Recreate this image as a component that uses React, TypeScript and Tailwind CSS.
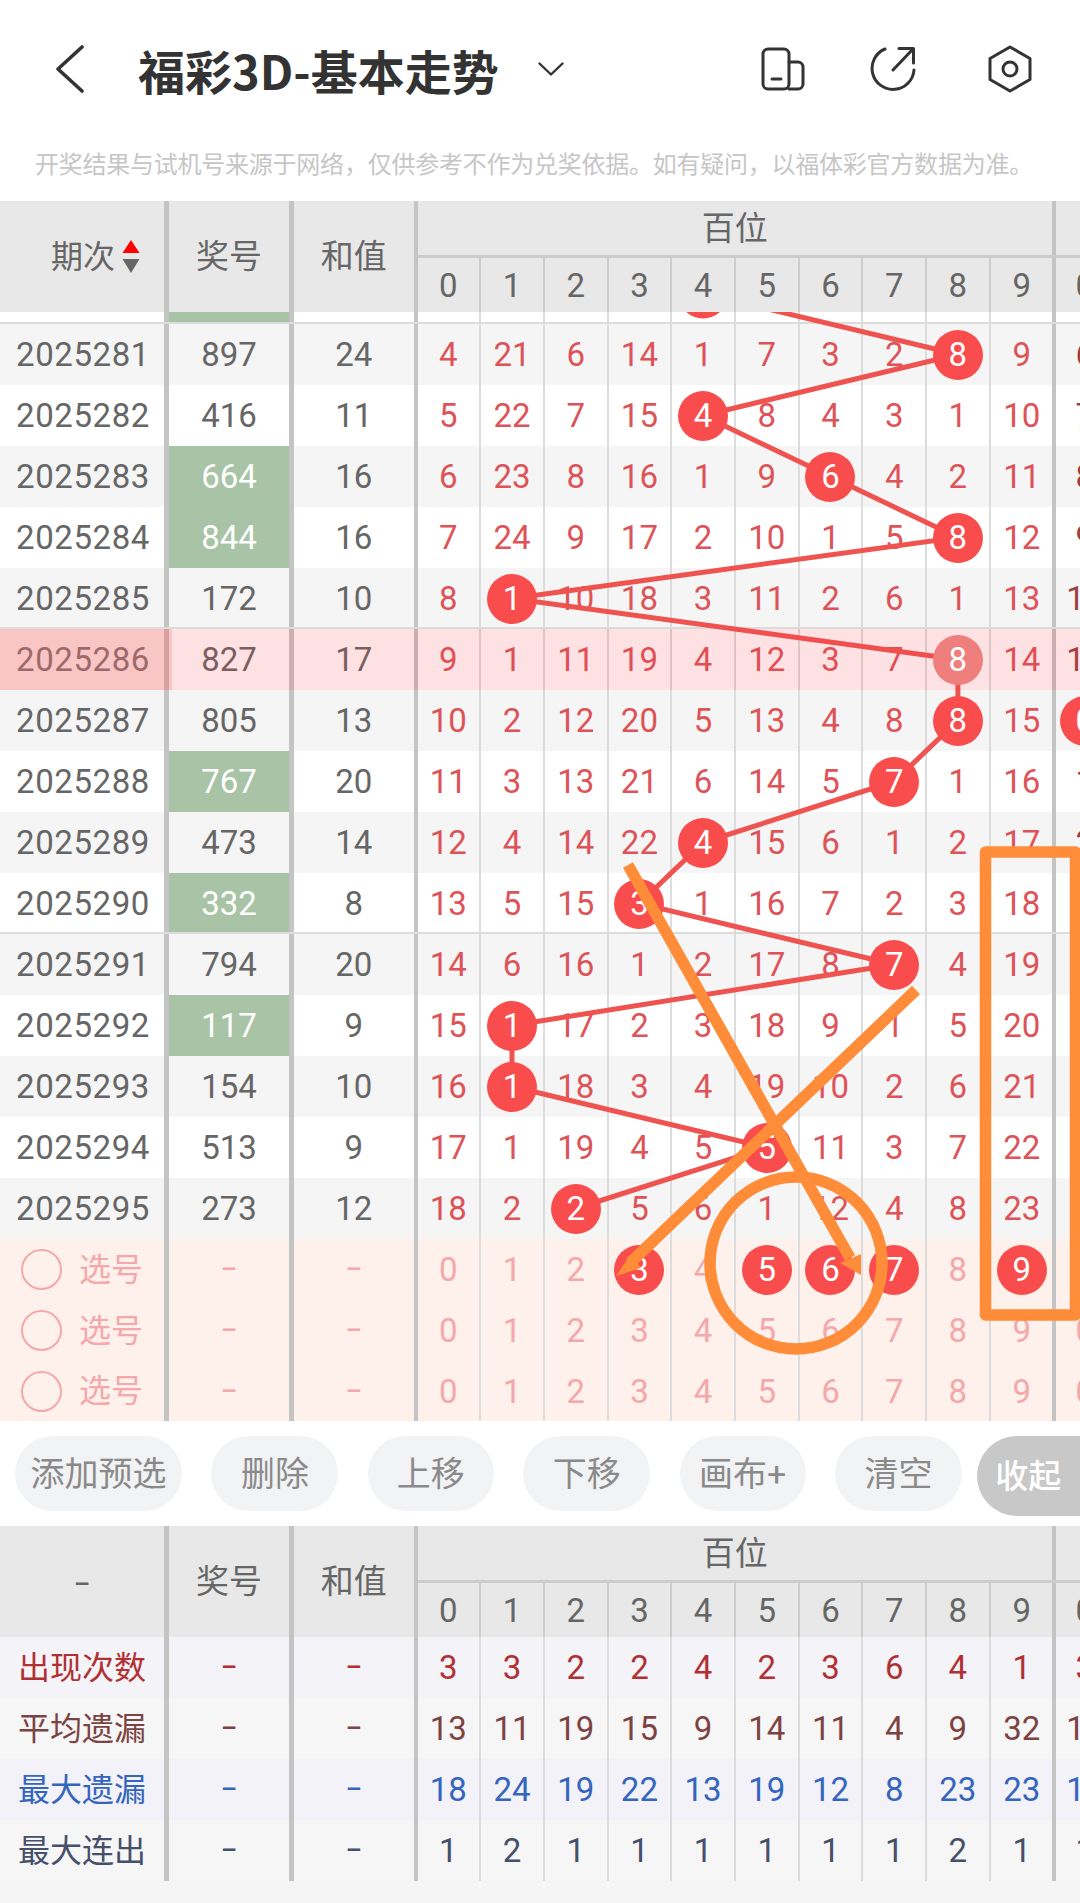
import React from "react";

interface TrendRow {
  period: string;
  code: string;
  sum: string;
  green?: boolean;
  ball: number;
  values: number[];
  tens: string;
  tensBall?: boolean;
}

const rows: TrendRow[] = [
  { period: "2025281", code: "897", sum: "24", ball: 8, values: [4, 21, 6, 14, 1, 7, 3, 2, 8, 9], tens: "6" },
  { period: "2025282", code: "416", sum: "11", ball: 4, values: [5, 22, 7, 15, 4, 8, 4, 3, 1, 10], tens: "7" },
  { period: "2025283", code: "664", sum: "16", green: true, ball: 6, values: [6, 23, 8, 16, 1, 9, 6, 4, 2, 11], tens: "8" },
  { period: "2025284", code: "844", sum: "16", green: true, ball: 8, values: [7, 24, 9, 17, 2, 10, 1, 5, 8, 12], tens: "9" },
  { period: "2025285", code: "172", sum: "10", ball: 1, values: [8, 1, 10, 18, 3, 11, 2, 6, 1, 13], tens: "10" },
  { period: "2025286", code: "827", sum: "17", ball: 8, values: [9, 1, 11, 19, 4, 12, 3, 7, 8, 14], tens: "11" },
  { period: "2025287", code: "805", sum: "13", ball: 8, values: [10, 2, 12, 20, 5, 13, 4, 8, 8, 15], tens: "0", tensBall: true },
  { period: "2025288", code: "767", sum: "20", green: true, ball: 7, values: [11, 3, 13, 21, 6, 14, 5, 7, 1, 16], tens: "1" },
  { period: "2025289", code: "473", sum: "14", ball: 4, values: [12, 4, 14, 22, 4, 15, 6, 1, 2, 17], tens: "2" },
  { period: "2025290", code: "332", sum: "8", green: true, ball: 3, values: [13, 5, 15, 3, 1, 16, 7, 2, 3, 18], tens: "3" },
  { period: "2025291", code: "794", sum: "20", ball: 7, values: [14, 6, 16, 1, 2, 17, 8, 7, 4, 19], tens: "4" },
  { period: "2025292", code: "117", sum: "9", green: true, ball: 1, values: [15, 1, 17, 2, 3, 18, 9, 1, 5, 20], tens: "5" },
  { period: "2025293", code: "154", sum: "10", ball: 1, values: [16, 1, 18, 3, 4, 19, 10, 2, 6, 21], tens: "6" },
  { period: "2025294", code: "513", sum: "9", ball: 5, values: [17, 1, 19, 4, 5, 5, 11, 3, 7, 22], tens: "7" },
  { period: "2025295", code: "273", sum: "12", ball: 2, values: [18, 2, 2, 5, 6, 1, 12, 4, 8, 23], tens: "8" },
];

const stats = [
  { label: "出现次数", color: "text-[#b03034]", bg: "bg-[#f3f3f8]", values: [3, 3, 2, 2, 4, 2, 3, 6, 4, 1], tens: "3" },
  { label: "平均遗漏", color: "text-[#7d4343]", bg: "bg-[#f6f6f6]", values: [13, 11, 19, 15, 9, 14, 11, 4, 9, 32], tens: "13" },
  { label: "最大遗漏", color: "text-[#3565bd]", bg: "bg-[#f2f2f8]", values: [18, 24, 19, 22, 13, 19, 12, 8, 23, 23], tens: "18" },
  { label: "最大连出", color: "text-[#46506a]", bg: "bg-[#f6f6f6]", values: [1, 2, 1, 1, 1, 1, 1, 1, 2, 1], tens: "1" },
];

const digits = [0, 1, 2, 3, 4, 5, 6, 7, 8, 9];
const picked = [3, 5, 6, 7, 9];
const actions = [
  { label: "添加预选", width: "w-[167px]" },
  { label: "删除", width: "w-[127px]" },
  { label: "上移", width: "w-[126px]" },
  { label: "下移", width: "w-[127px]" },
  { label: "画布+", width: "w-[126px]" },
  { label: "清空", width: "w-[127px]" },
];

// centre of a digit column / trend row in page pixels
const colX = (i: number) => 448.3 + 63.7 * i;
const rowY = (i: number) => 354.5 + 61 * i;

const Ball = ({ value, faded }: { value: React.ReactNode; faded?: boolean }) => (
  <span
    className={`relative flex size-[50px] shrink-0 items-center justify-center rounded-full text-white ${
      faded ? "z-30 bg-[#ef7f7d]" : "z-10 bg-[#f94c4c]"
    }`}
  >
    {value}
  </span>
);

const Dash = () => <span className="text-[25px] font-medium">–</span>;

const DigitCells = ({ render, line = "border-[#dcdcdc]" }: { render: (i: number) => React.ReactNode; line?: string }) => (
  <>
    {digits.map((d) =>
      d === 9 ? (
        <div key={d} className="flex w-[65.2px] shrink-0 items-center justify-center border-r-4 border-[#c4c4c4] pl-[1px]">
          {render(d)}
        </div>
      ) : (
        <div key={d} className={`flex w-[63.7px] shrink-0 items-center justify-center border-r-2 ${line}`}>
          {render(d)}
        </div>
      )
    )}
  </>
);

const TableHeader = ({ first }: { first: React.ReactNode }) => (
  <div className="relative z-40 flex h-[111px] bg-[#e8e8e8] text-[#666666]">
    <div className="flex w-[169px] shrink-0 items-center border-r-[5px] border-[#c4c4c4]">{first}</div>
    <div className="flex w-[125px] shrink-0 items-center justify-center border-r-[5px] border-[#c4c4c4]">奖号</div>
    <div className="flex w-[123.5px] shrink-0 items-center justify-center border-r-4 border-[#c4c4c4]">和值</div>
    <div className="flex min-w-0 flex-1 flex-col">
      <div className="flex h-[57px] shrink-0 border-b-[3px] border-[#cccccc]">
        <div className="flex w-[638.5px] shrink-0 items-center justify-center border-r-4 border-[#c4c4c4]">百位</div>
      </div>
      <div className="flex flex-1">
        <DigitCells line="border-[#cdcdcd]" render={(d) => d} />
        <div className="flex w-[58px] shrink-0 items-center justify-center">0</div>
      </div>
    </div>
  </div>
);

const TrendRowView = ({ row, index }: { row: TrendRow; index: number }) => (
  <div className={`relative flex h-[61px] ${index % 2 === 0 ? "bg-[#f5f5f5]" : "bg-white"}`}>
    {(index === 5 || index === 10) && <div className="absolute inset-x-0 -top-[2px] h-[2px] bg-[#dcdcdc]" />}
    <div className="flex w-[169px] shrink-0 items-center justify-center border-r-[5px] border-[#c4c4c4] pl-[2px] tracking-[0.6px] text-[#666666]">
      {row.period}
    </div>
    <div
      className={`flex w-[125px] shrink-0 items-center justify-center border-r-[5px] border-[#c4c4c4] ${
        row.green ? "bg-[#a8c3a5] text-white" : "text-[#666666]"
      }`}
    >
      {row.code}
    </div>
    <div className="flex w-[123.5px] shrink-0 items-center justify-center border-r-4 border-[#c4c4c4] text-[#666666]">{row.sum}</div>
    <DigitCells
      render={(d) =>
        d === row.ball ? <Ball value={d} faded={index === 5} /> : <span className="text-[#dd5358]">{row.values[d]}</span>
      }
    />
    <div className="flex w-[58px] shrink-0 items-center justify-center">
      {row.tensBall ? <Ball value={row.tens} /> : <span className="text-[#9c3f40]">{row.tens}</span>}
    </div>
    {index === 5 && (
      <>
        <div className="absolute inset-0 z-20 bg-[rgba(250,60,70,0.15)]" />
        <div className="absolute inset-y-0 left-0 z-20 w-[172px] bg-[rgba(240,130,130,0.3)]" />
      </>
    )}
  </div>
);

const PickRow = ({ balls, height }: { balls: boolean; height: string }) => (
  <div className={`flex ${height} bg-[#fef0ea] text-[#f4a8ab]`}>
    <div className="flex w-[169px] shrink-0 items-center gap-[17px] border-r-[5px] border-[#c4c4c4] pl-[21px]">
      <span className="size-[41px] rounded-full border-2 border-[#f4a8ab]" />
      <span className="text-[32px]">选号</span>
    </div>
    <div className="flex w-[125px] shrink-0 items-center justify-center border-r-[5px] border-[#c4c4c4]">
      <Dash />
    </div>
    <div className="flex w-[123.5px] shrink-0 items-center justify-center border-r-4 border-[#c4c4c4]">
      <Dash />
    </div>
    <DigitCells render={(d) => (balls && picked.includes(d) ? <Ball value={d} /> : d)} />
    <div className="flex w-[58px] shrink-0 items-center justify-center">0</div>
  </div>
);

const ballPath = rows.map((r, i) => `${colX(r.ball)},${rowY(i)}`).join(" ");

const App = () => {
  return (
    <div className="h-[1903px] w-[1080px] overflow-hidden bg-white text-[33px] leading-none [font-family:Roboto,'Noto_Sans_CJK_SC',sans-serif]">
      {/* Title bar */}
      <div className="flex h-[138px] items-center pl-[56px] pr-[46px] text-[#333333]">
        <svg width="28" height="50" viewBox="0 0 28 50" fill="none" stroke="#333333" strokeWidth="3.6" strokeLinecap="round" strokeLinejoin="round">
          <path d="M26 3 L2 25 L26 47" />
        </svg>
        <h1 className="ml-[54px] whitespace-nowrap text-[47px] font-bold [font-family:'Noto_Sans_CJK_SC',sans-serif]">福彩3D-基本走势</h1>
        <svg className="ml-[39px]" width="26" height="14" viewBox="0 0 26 14" fill="none" stroke="#333333" strokeWidth="2.4" strokeLinecap="round" strokeLinejoin="round">
          <path d="M1.5 1.5 L13 12.5 L24.5 1.5" />
        </svg>
        <div className="ml-auto flex items-center gap-[63px]">
          <svg width="46" height="46" viewBox="0 0 46 46" fill="none" stroke="#333333" strokeWidth="3" strokeLinecap="round" strokeLinejoin="round">
            <rect x="2" y="3" width="26" height="40" rx="5" />
            <path d="M28 16 H37 a5 5 0 0 1 5 5 V38 a5 5 0 0 1 -5 5 H28" />
            <path d="M11 33 H20" />
          </svg>
          <svg width="48" height="48" viewBox="0 0 48 48" fill="none" stroke="#333333" strokeWidth="3" strokeLinecap="round" strokeLinejoin="round">
            <path d="M15 4 A21 21 0 1 0 44 25" />
            <path d="M23 25 L43 4" />
            <path d="M29 3.5 H43.5 V18" />
          </svg>
          <svg className="ml-[5px]" width="48" height="50" viewBox="0 0 48 50" fill="none" stroke="#333333" strokeWidth="3" strokeLinecap="round" strokeLinejoin="round">
            <path d="M24 3 L44 14.5 V35.5 L24 47 L4 35.5 V14.5 Z" />
            <circle cx="24" cy="25" r="7" />
          </svg>
        </div>
      </div>

      {/* Source note */}
      <div className="h-[63px] whitespace-nowrap pl-[35px] pt-[15px] text-[24px] tracking-[-0.24px] text-[#c6c6c6]">
        开奖结果与试机号来源于网络，仅供参考不作为兑奖依据。如有疑问，以福体彩官方数据为准。
      </div>

      <TableHeader
        first={
          <div className="flex items-center gap-[7px] pl-[51px]">
            <span className="text-[32px]">期次</span>
            <svg width="18" height="33" viewBox="0 0 18 33">
              <path d="M9 0 L17.5 13 H0.5 Z" fill="#ff0000" />
              <path d="M0.5 19 H17.5 L9 33 Z" fill="#666666" />
            </svg>
          </div>
        }
      />

      {/* Trend table */}
      <div className="relative isolate">
        <div className="flex h-[12px] border-b-2 border-[#dcdcdc] bg-white">
          <div className="w-[169px] shrink-0 border-r-[5px] border-[#c4c4c4]" />
          <div className="w-[125px] shrink-0 border-r-[5px] border-[#c4c4c4] bg-[#a8c3a5]" />
          <div className="w-[123.5px] shrink-0 border-r-4 border-[#c4c4c4]" />
          <DigitCells render={() => null} />
        </div>
        {rows.map((row, i) => (
          <TrendRowView key={row.period} row={row} index={i} />
        ))}
        <PickRow balls height="h-[61px]" />
        <PickRow balls={false} height="h-[61px]" />
        <PickRow balls={false} height="h-[60px]" />

        {/* ball connecting line */}
        <svg className="absolute left-0 top-0 z-[5]" width="1080" height="1109" viewBox="0 312 1080 1109" fill="none">
          <circle cx={colX(4)} cy={293.5} r={25} fill="#f94c4c" />
          <polyline points={`${colX(4)},293.5 ${ballPath}`} stroke="#ef5350" strokeWidth="5" />
        </svg>

        {/* hand drawn marks */}
        <svg className="absolute left-0 top-0 z-40" width="1080" height="1109" viewBox="0 312 1080 1109" fill="none" stroke="#ff8c38" strokeWidth="11.5">
          <rect x="985.5" y="852" width="90" height="463" strokeLinejoin="round" />
          <circle cx="796" cy="1263" r="86" />
          <path d="M628 865 L850 1258" />
          <path d="M861 1275 L861 1254 L840 1263 Z" fill="#ff8c38" stroke="none" />
          <path d="M916 990 L630 1263" />
          <path d="M616 1276 L641 1268 L631 1254 Z" fill="#ff8c38" stroke="none" />
        </svg>
      </div>

      {/* Action buttons */}
      <div className="flex h-[105px] items-start gap-[29.4px] pl-[15px] pt-[15px]">
        {actions.map((a) => (
          <button key={a.label} className={`flex h-[75px] ${a.width} shrink-0 items-center justify-center rounded-full bg-[#f2f3f5] text-[34px] text-[#8a8a8a]`}>
            {a.label}
          </button>
        ))}
        <button className="-ml-[14px] flex h-[80px] w-[140px] shrink-0 items-center justify-start rounded-full bg-[#c8c8c8] pl-[18px] text-[33px] font-medium text-white">
          收起
        </button>
      </div>

      <TableHeader
        first={
          <span className="w-full text-center">
            <Dash />
          </span>
        }
      />

      {/* Stats table */}
      {stats.map((s) => (
        <div key={s.label} className={`flex h-[61px] ${s.bg} ${s.color}`}>
          <div className="flex w-[169px] shrink-0 items-center justify-center border-r-[5px] border-[#c4c4c4] text-[32px]">{s.label}</div>
          <div className="flex w-[125px] shrink-0 items-center justify-center border-r-[5px] border-[#c4c4c4]">
            <Dash />
          </div>
          <div className="flex w-[123.5px] shrink-0 items-center justify-center border-r-4 border-[#c4c4c4]">
            <Dash />
          </div>
          <DigitCells render={(d) => s.values[d]} />
          <div className="flex w-[58px] shrink-0 items-center justify-center">{s.tens}</div>
        </div>
      ))}
      <div className="h-[22px] bg-[#f5f5f5]" />
    </div>
  );
};

export default App;
